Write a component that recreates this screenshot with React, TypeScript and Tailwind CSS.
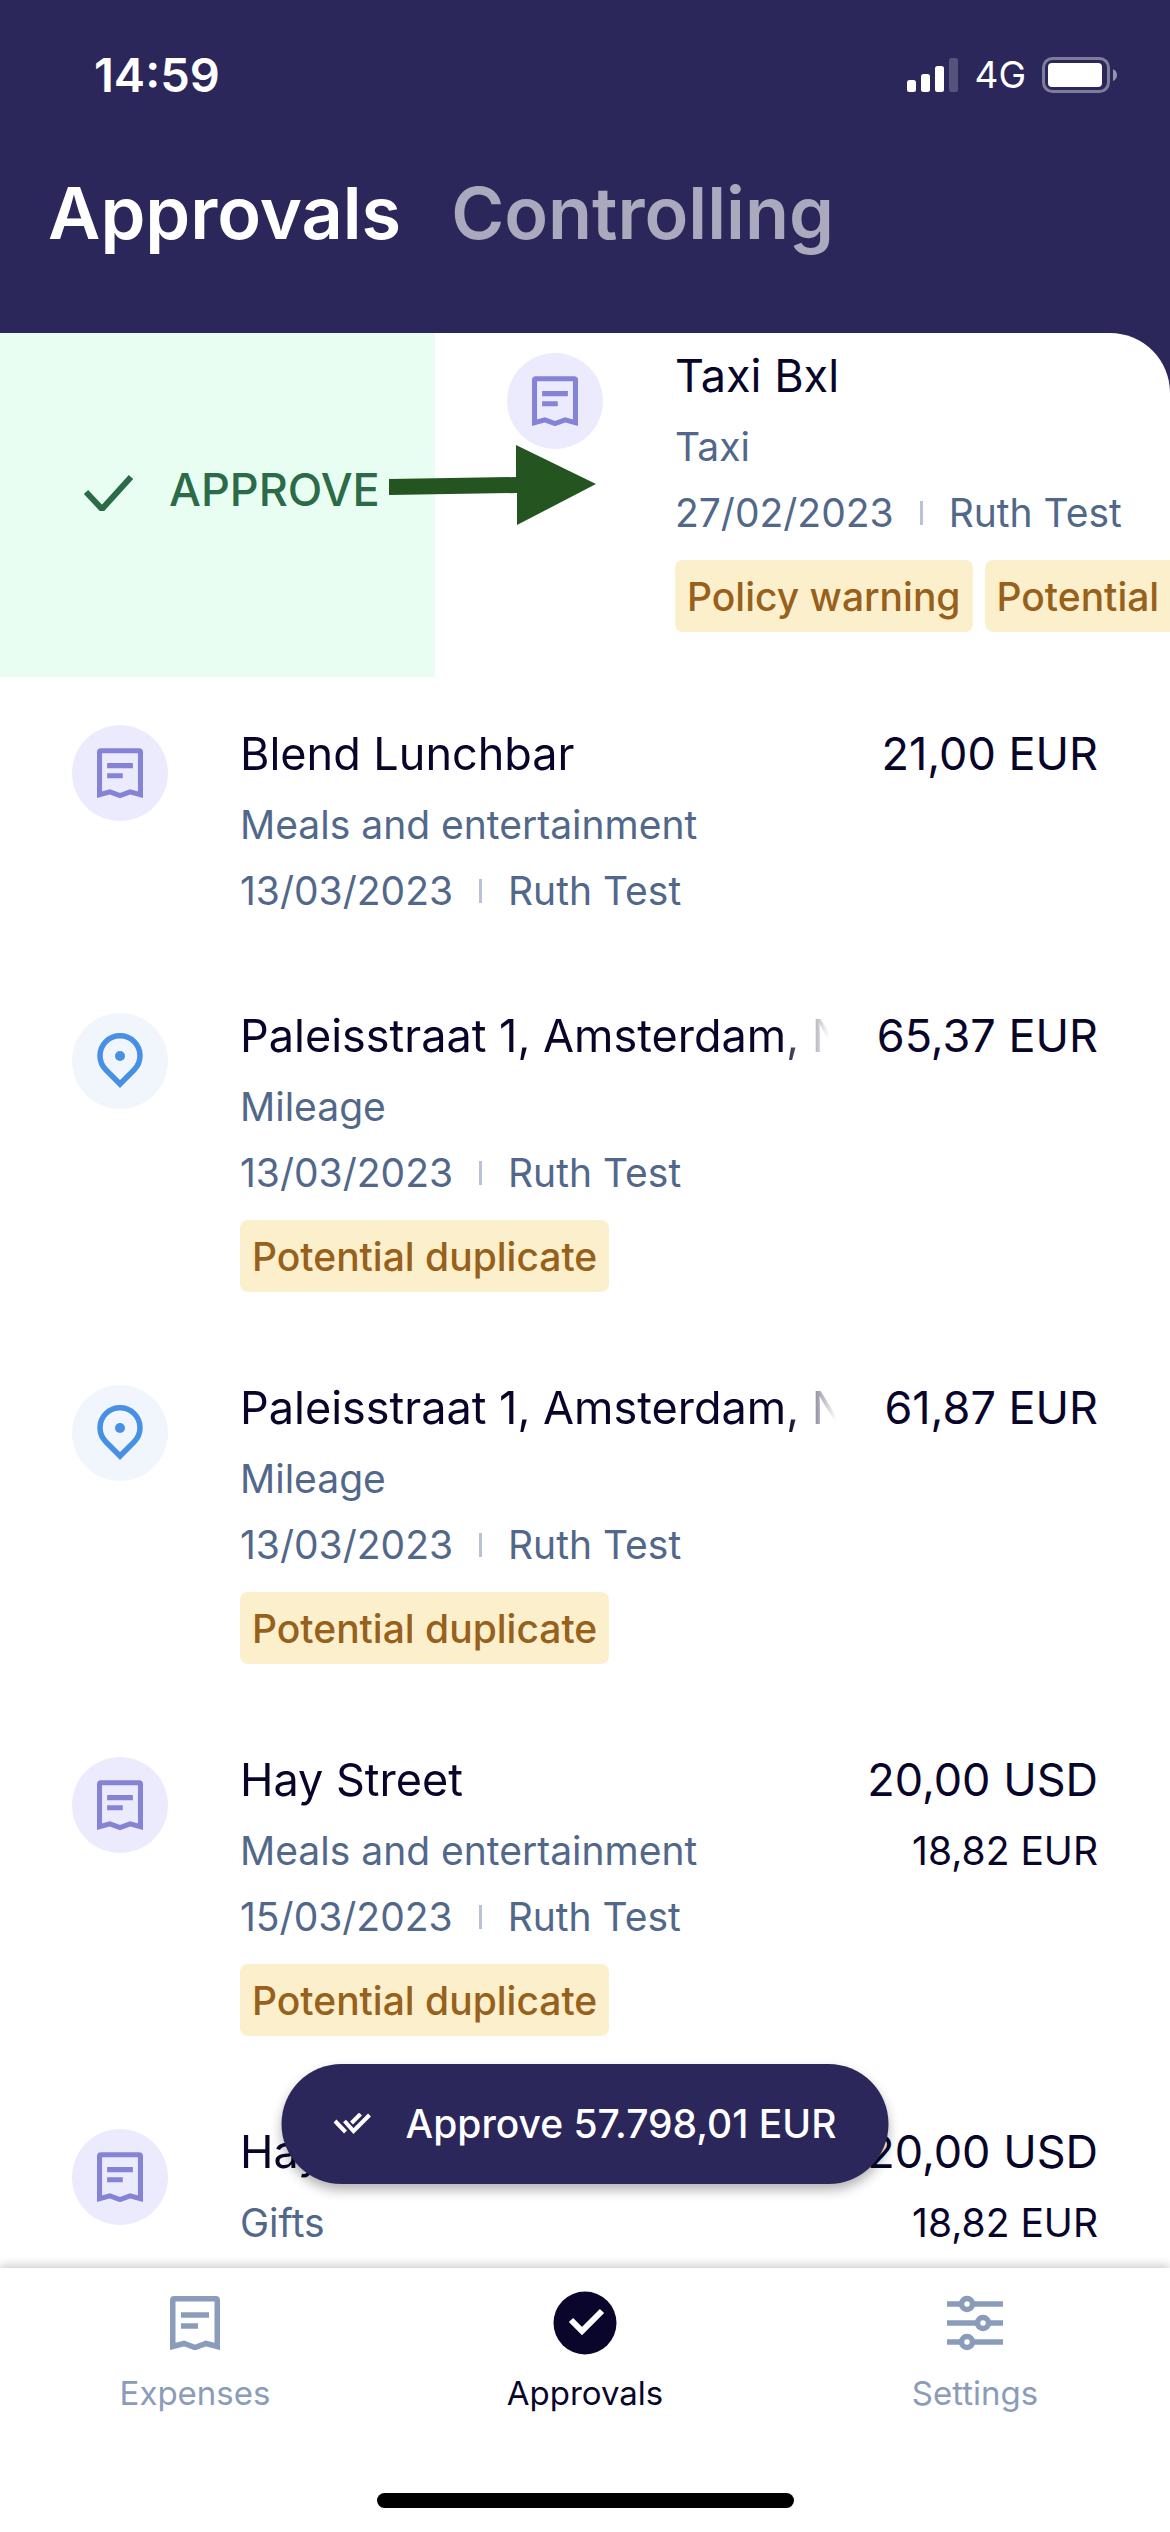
import type { ReactNode } from "react";

function ReceiptIcon({ className }: { className: string }) {
  return (
    <svg viewBox="0 0 50 54" fill="none" stroke="currentColor" strokeWidth="5.500" className={className} aria-hidden="true">
      <path d="M2.750 50.500V4.250q0-1.500 1.500-1.500H45.750q1.500 0 1.500 1.500V50.500L36 47.500L25 51.500L14 47.500Z" />
      <path d="M11 19H39M11 30H28" />
    </svg>
  );
}

function PinIcon() {
  return (
    <svg viewBox="0 0 46 56" fill="none" className="h-[56px] w-[46px]" aria-hidden="true">
      <path d="M23 51L9 37A20 20 0 1 1 37 37Z" stroke="currentColor" strokeWidth="5.500" />
      <circle cx="23" cy="23" r="5" fill="currentColor" />
    </svg>
  );
}

function StatusBar() {
  return (
    <div className="flex items-center justify-between pr-[52px] pl-[94px] text-white">
      <time className="text-[47px] leading-[54px] font-semibold">14:59</time>
      <div className="flex items-center gap-[16px]">
        <svg viewBox="0 0 51 36" className="h-[36px] w-[51px]" fill="white" aria-label="Signal strength">
          <rect x="0" y="23" width="9" height="12" rx="2.500" />
          <rect x="14" y="17" width="9" height="18" rx="2.500" />
          <rect x="28" y="9" width="9" height="26" rx="2.500" />
          <rect x="42" y="1" width="9" height="34" rx="2.500" opacity="0.2" />
        </svg>
        <span className="text-[37px] leading-[54px]">4G</span>
        <svg viewBox="0 0 76 36" className="h-[36px] w-[76px]" aria-label="Battery">
          <rect x="1.500" y="1.500" width="65" height="33" rx="9" fill="none" stroke="white" strokeWidth="3" opacity="0.4" />
          <rect x="6" y="6" width="54" height="24" rx="4" fill="white" />
          <path d="M71 12q4 2 4 6t-4 6Z" fill="white" opacity="0.5" />
        </svg>
      </div>
    </div>
  );
}

type Expense = {
  kind: "receipt" | "mileage";
  title: string;
  category: string;
  date: string;
  person: string;
  amount: string;
  converted?: string;
  tags: string[];
};

const expenses: Expense[] = [
  { kind: "receipt", title: "Blend Lunchbar", category: "Meals and entertainment", date: "13/03/2023", person: "Ruth Test", amount: "21,00 EUR", tags: [] },
  { kind: "mileage", title: "Paleisstraat 1, Amsterdam, NL", category: "Mileage", date: "13/03/2023", person: "Ruth Test", amount: "65,37 EUR", tags: ["Potential duplicate"] },
  { kind: "mileage", title: "Paleisstraat 1, Amsterdam, NL", category: "Mileage", date: "13/03/2023", person: "Ruth Test", amount: "61,87 EUR", tags: ["Potential duplicate"] },
  { kind: "receipt", title: "Hay Street", category: "Meals and entertainment", date: "15/03/2023", person: "Ruth Test", amount: "20,00 USD", converted: "18,82 EUR", tags: ["Potential duplicate"] },
  { kind: "receipt", title: "Hay Street", category: "Gifts", date: "15/03/2023", person: "Ruth Test", amount: "20,00 USD", converted: "18,82 EUR", tags: ["Potential duplicate"] },
];

function KindBadge({ kind }: { kind: Expense["kind"] }) {
  return kind === "receipt" ? (
    <span className="flex size-[96px] shrink-0 items-center justify-center rounded-full bg-[#ecebfd] text-[#8583d6]">
      <ReceiptIcon className="h-[50px] w-[46px]" />
    </span>
  ) : (
    <span className="flex size-[96px] shrink-0 items-center justify-center rounded-full bg-[#f1f6fd] text-[#4790e3]">
      <PinIcon />
    </span>
  );
}

function Details({ date, person }: { date: string; person: string }) {
  return (
    <p className="flex items-center text-[39px] leading-[66px] text-[#52688a]">
      {date}
      <span className="mx-[26px] h-[24px] w-[3px] bg-[#b8c3d8]" />
      {person}
    </p>
  );
}

function Tags({ tags }: { tags: string[] }) {
  return (
    <ul className="mt-[14px] flex gap-3">
      {tags.map((tag) => (
        <li key={tag} className="shrink-0 rounded-[8px] bg-[#fcefcc] px-3 pt-0.5 text-[39px] leading-[70px] font-medium whitespace-nowrap text-[#97601b]">
          {tag}
        </li>
      ))}
    </ul>
  );
}

function Row({ expense }: { expense: Expense }) {
  const tagged = expense.tags.length > 0;
  return (
    <li className={tagged ? "flex gap-[72px] px-[72px] pt-[48px] pb-[45px]" : "flex gap-[72px] px-[72px] pt-[48px] pb-[41px]"}>
      <KindBadge kind={expense.kind} />
      <div className={tagged ? "min-w-0 flex-1" : "min-w-0 flex-1 pt-[6px]"}>
        <div className="flex gap-[48px] text-[45px] leading-[45px] whitespace-nowrap text-[#09052a]">
          <h2 className="-mb-2 min-w-0 flex-1 overflow-hidden pb-2 [mask-image:linear-gradient(to_right,black_calc(100%-48px),transparent)]">
            {expense.title}
          </h2>
          <span>{expense.amount}</span>
        </div>
        <div className="mt-4 flex justify-between text-[39px] leading-[66px]">
          <span className="text-[#52688a]">{expense.category}</span>
          <span className="text-[#09052a]">{expense.converted}</span>
        </div>
        <Details date={expense.date} person={expense.person} />
        {tagged && <Tags tags={expense.tags} />}
      </div>
    </li>
  );
}

function SwipedRow() {
  return (
    <li className="relative flex h-[344px] overflow-hidden">
      <button className="flex w-[435px] shrink-0 items-center gap-[32px] bg-[#e8fef3] pb-[30px] pl-[81px] text-[45px] leading-[54px] font-medium text-[#2c6b47]">
        <svg viewBox="0 0 56 42" className="h-[42px] w-[56px] shrink-0" fill="none" stroke="currentColor" strokeWidth="6" aria-hidden="true">
          <path d="M5 23L21 40L50 8" />
        </svg>
        APPROVE
      </button>
      <div className="flex shrink-0 gap-[72px] pt-5 pl-[72px]">
        <KindBadge kind="receipt" />
        <div>
          <h2 className="text-[45px] leading-[45px] text-[#09052a]">Taxi Bxl</h2>
          <p className="mt-4 text-[39px] leading-[66px] text-[#52688a]">Taxi</p>
          <Details date="27/02/2023" person="Ruth Test" />
          <Tags tags={["Policy warning", "Potential duplicate"]} />
        </div>
      </div>
      <svg viewBox="0 0 207 80" className="absolute top-[112px] left-[389px] h-[80px] w-[207px]" fill="#245521" aria-hidden="true">
        <path d="M0 34L127 32L127 0L207 39L128 80L128 48L0 50Z" />
      </svg>
    </li>
  );
}

function Tab({ label, active, children }: { label: string; active?: boolean; children: ReactNode }) {
  return (
    <a href="#" aria-current={active ? "page" : undefined} className={active ? "flex flex-1 flex-col items-center text-[#0a062b]" : "flex flex-1 flex-col items-center text-[#8a9cb9]"}>
      <span className="flex h-[66px] items-center">{children}</span>
      <span className="mt-[13px] text-[33px] leading-[48px]">{label}</span>
    </a>
  );
}

export default function App() {
  return (
    <div className="flex h-screen flex-col overflow-hidden bg-[#2c275a] font-['Inter',sans-serif]">
      <header className="shrink-0 pt-[48px] pb-[76px]">
        <StatusBar />
        <nav className="mt-[67px] flex gap-[50px] px-[48px] text-[72px] leading-[88px] font-semibold">
          <a href="#" aria-current="page" className="text-white">Approvals</a>
          <a href="#" className="text-[#aba9be]">Controlling</a>
        </nav>
      </header>
      <main className="relative min-h-0 flex-1 overflow-hidden rounded-tr-[60px] bg-white">
        <ul>
          <SwipedRow />
          {expenses.map((expense, i) => (
            <Row key={i} expense={expense} />
          ))}
        </ul>
        <button className="absolute bottom-[84px] left-1/2 flex h-[120px] -translate-x-1/2 items-center gap-[34px] rounded-full bg-[#2c275a] px-[52px] text-[39px] leading-[48px] font-medium whitespace-nowrap text-white shadow-[0_6px_12px_rgba(0,0,0,0.3)]">
          <svg viewBox="0 0 38 22" className="h-[22px] w-[38px]" fill="none" stroke="currentColor" strokeWidth="4" aria-hidden="true">
            <path d="M1.500 8L12 19M11 8L20 18L36 2M18 10L27 1" />
          </svg>
          Approve 57.798,01 EUR
        </button>
      </main>
      <footer className="relative shrink-0 bg-white pt-[22px] pb-6 shadow-[0_-3px_9px_rgba(0,0,0,0.2)]">
        <nav className="flex">
          <Tab label="Expenses">
            <ReceiptIcon className="h-[54px] w-[50px]" />
          </Tab>
          <Tab label="Approvals" active>
            <svg viewBox="0 0 64 64" className="size-[64px]" aria-hidden="true">
              <circle cx="32" cy="32" r="31.500" fill="currentColor" />
              <path d="M18 29L29 40L49 20" fill="none" stroke="white" strokeWidth="6" />
            </svg>
          </Tab>
          <Tab label="Settings">
            <svg viewBox="0 0 56 56" className="size-[56px]" fill="none" stroke="currentColor" strokeWidth="5.500" aria-hidden="true">
              <path d="M0 9H14M25 9H56M0 28H30M42 28H56M0 47H14M25 47H56" />
              <circle cx="20" cy="9" r="5.500" />
              <circle cx="36" cy="28" r="5.500" />
              <circle cx="20" cy="47" r="5.500" />
            </svg>
          </Tab>
        </nav>
        <div className="mx-auto mt-[76px] h-[15px] w-[417px] rounded-full bg-black" />
      </footer>
    </div>
  );
}
